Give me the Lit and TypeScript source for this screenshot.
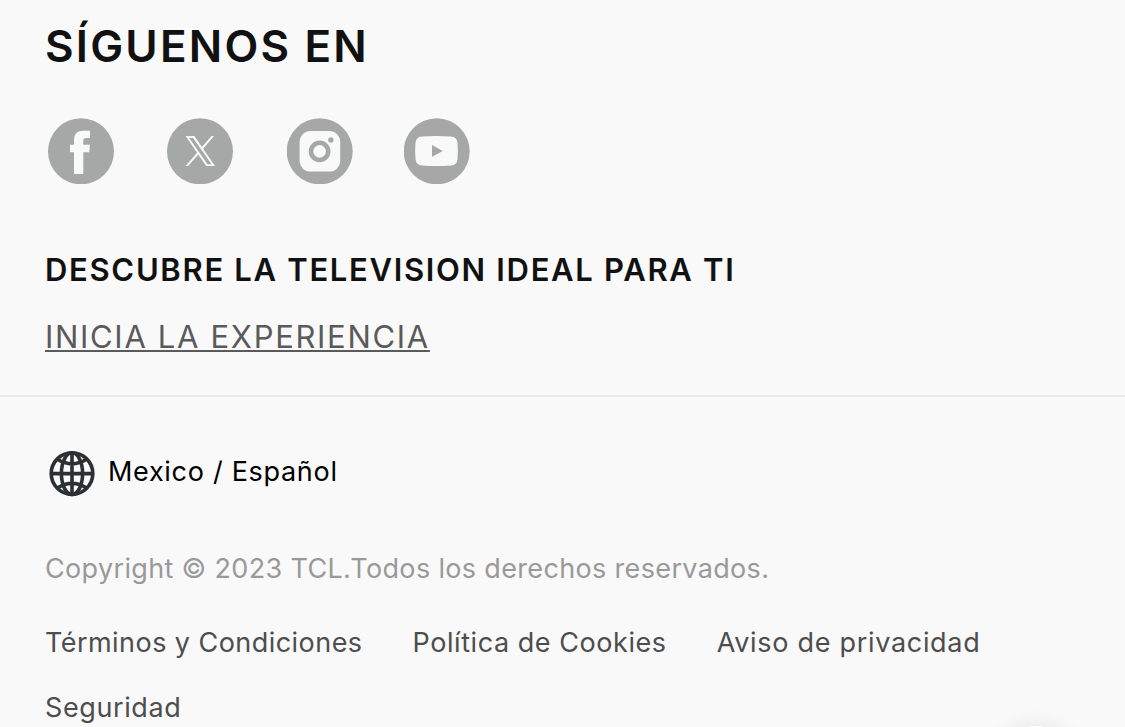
import { LitElement, html, css, svg } from 'lit';
import { customElement, property } from 'lit/decorators.js';

type SocialName = 'facebook' | 'x' | 'instagram' | 'youtube';

@customElement('social-icon')
export class SocialIcon extends LitElement {
    @property({ type: String }) name: SocialName = 'facebook';

    static styles = css`
    :host {
      display: block;
      width: 66px;
      height: 66px;
    }

    svg {
      display: block;
    }

    .disc {
      fill: #a6a8a7;
    }

    .glyph {
      fill: #f9f9f9;
    }

    .ring {
      fill: none;
      stroke: #a6a8a7;
      stroke-width: 4.6;
    }
  `;

    private getGlyph() {
        switch (this.name) {
            case 'x': return svg`
        <circle class="disc" cx="33" cy="33.3" r="33" />
        <path class="glyph" transform="translate(18.6 18) scale(0.0245)" d="M714.163 519.284L1160.89 0H1055.03L667.137 450.887L357.328 0H0L468.492 681.821L0 1226.37H105.866L515.491 750.218L842.672 1226.37H1200L714.137 519.284ZM569.165 687.828L521.697 619.934L144.011 79.694H306.615L611.412 515.685L658.88 583.579L1055.08 1150.3H892.476L569.165 687.854Z" />`;
            case 'instagram': return svg`
        <circle class="disc" cx="32.7" cy="33.3" r="33" />
        <rect class="glyph" x="12.6" y="13" width="40.6" height="40.6" rx="11" />
        <circle class="ring" cx="32.6" cy="33.4" r="8.6" />
        <circle class="disc" cx="43.9" cy="22" r="2.7" />`;
            case 'youtube': return svg`
        <circle class="disc" cx="32.7" cy="33.3" r="33" />
        <path class="glyph" d="M18 18.6Q32.5 17.4 47 18.6Q53 19 53.5 25Q54.3 33 53.5 41Q53 47.2 47 47.5Q32.5 48.6 18 47.5Q12 47.2 11.5 41Q10.7 33 11.5 25Q12 19 18 18.6Z" />
        <path class="disc" d="M28 27L38.8 32.9L28 38.8Z" />`;
            default: return svg`
        <circle class="disc" cx="33" cy="33.3" r="33" />
        <path class="glyph" d="M26 56V34.3H22V26.8H26V22.5C26 15.5 29.5 12.8 35.5 12.8H42V20H38C36 20 35.3 21 35.3 22.7V26.8H41.9L41.2 34.3H35.3V56Z" />`;
        }
    }

    render() {
        return html`<svg width="66" height="66" viewBox="0 0 66 66">${this.getGlyph()}</svg>`;
    }
}

@customElement('app-root')
export class AppRoot extends LitElement {
    static styles = css`
    :host {
      display: block;
      position: relative;
      height: 727px;
      overflow: hidden;
      background: #f9f9f9;
      color: #4d4d4d;
      font-family: Inter, "Liberation Sans", sans-serif;
    }

    .upper {
      box-sizing: border-box;
      height: 397px;
      padding: 16px 45px 0;
      border-bottom: 2px solid #ececec;
    }

    h2, h3 {
      margin: 0;
      color: #111;
      white-space: nowrap;
    }

    h2 {
      font-size: 44px;
      line-height: 60px;
      font-weight: 600;
      letter-spacing: 2.2px;
    }

    h3 {
      margin-top: 66px;
      font-size: 31px;
      line-height: 40px;
      font-weight: 560;
      letter-spacing: 1.68px;
    }

    .social {
      display: flex;
      gap: 53px;
      margin: 42px 0 0 3px;
    }

    .social .instagram {
      margin: 0 -2px 0 1px;
    }

    .start {
      display: inline-block;
      margin-top: 27px;
      color: #5a5a5a;
      font-size: 31px;
      line-height: 40px;
      font-weight: 400;
      letter-spacing: 1.68px;
      text-decoration: underline;
      text-decoration-thickness: 2px;
      text-underline-offset: 2px;
      text-decoration-skip-ink: none;
      white-space: nowrap;
    }

    .lower {
      padding: 54px 45px 0;
      font-size: 27px;
      line-height: 40px;
      letter-spacing: 0.4px;
    }

    .region {
      display: flex;
      align-items: center;
      gap: 13px;
      height: 46px;
      margin-left: 4px;
      color: #000;
    }

    .region span {
      margin-top: -4px;
      letter-spacing: 0.7px;
    }

    .copyright {
      margin: 52px 0 0;
      color: #999;
      letter-spacing: 0.34px;
      white-space: nowrap;
    }

    .links {
      display: flex;
      flex-wrap: wrap;
      gap: 25px 50px;
      margin-top: 34px;
    }

    .links a {
      color: inherit;
      letter-spacing: 0.45px;
      white-space: nowrap;
    }

    .links .cookies {
      letter-spacing: 0.56px;
    }

    .links .privacy {
      letter-spacing: 0.7px;
    }

    .links .security {
      letter-spacing: 0.6px;
    }

    .float {
      position: absolute;
      left: 988px;
      top: 726px;
      width: 96px;
      height: 96px;
      border-radius: 50%;
      background: #fff;
      box-shadow: 0 0 20px rgba(0, 0, 0, 0.09);
    }
  `;

    render() {
        return html`
      <section class="upper">
        <h2 class="title">SÍGUENOS EN</h2>
        <div class="social">
          <social-icon name="facebook"></social-icon>
          <social-icon name="x"></social-icon>
          <social-icon class="instagram" name="instagram"></social-icon>
          <social-icon name="youtube"></social-icon>
        </div>
        <h3 class="discover">DESCUBRE LA TELEVISION IDEAL PARA TI</h3>
        <a class="start">INICIA LA EXPERIENCIA</a>
      </section>
      <section class="lower">
        <div class="region">
          <svg width="46" height="46" viewBox="0 0 46 46" fill="none" stroke="#2d3032" stroke-width="3.6">
            <circle cx="23" cy="22.6" r="20.8" />
            <ellipse cx="23" cy="22.6" rx="10.6" ry="20.8" />
            <path d="M23 2V43M2 22.6H44M8 8Q23 17.6 38 8M8 37.2Q23 27.6 38 37.2" />
          </svg>
          <span class="locale">Mexico / Español</span>
        </div>
        <p class="copyright">Copyright © 2023 TCL.Todos los derechos reservados.</p>
        <nav class="links">
          <a class="terms">Términos y Condiciones</a>
          <a class="cookies">Política de Cookies</a>
          <a class="privacy">Aviso de privacidad</a>
          <a class="security">Seguridad</a>
        </nav>
      </section>
      <div class="float"></div>
    `;
    }
}
